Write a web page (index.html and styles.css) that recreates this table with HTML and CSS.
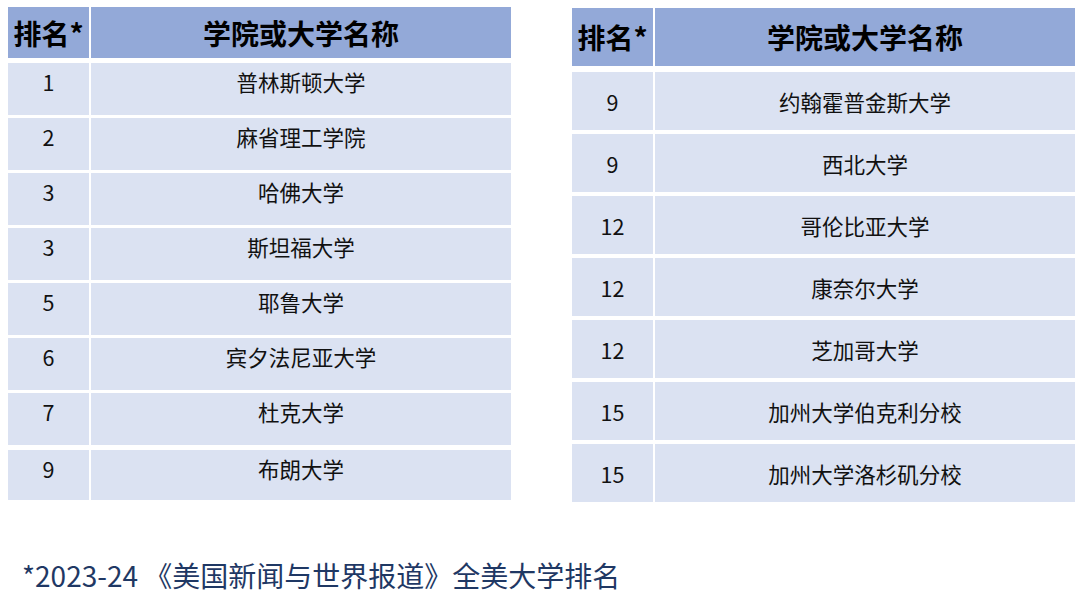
FILE: index.html
```html
<!DOCTYPE html>
<html lang="zh">
<head>
<meta charset="utf-8">
<link rel="stylesheet" href="styles.css">
</head>
<body>
<div class="page">
  <div class="tables">
    <div class="table table-left">
      <div class="cell head">排名*</div>
      <div class="cell head">学院或大学名称</div>
      <div class="cell">1</div><div class="cell">普林斯顿大学</div>
      <div class="cell">2</div><div class="cell">麻省理工学院</div>
      <div class="cell">3</div><div class="cell">哈佛大学</div>
      <div class="cell">3</div><div class="cell">斯坦福大学</div>
      <div class="cell">5</div><div class="cell">耶鲁大学</div>
      <div class="cell">6</div><div class="cell">宾夕法尼亚大学</div>
      <div class="cell">7</div><div class="cell">杜克大学</div>
      <div class="cell last">9</div><div class="cell last">布朗大学</div>
    </div>
    <div class="table table-right">
      <div class="cell head">排名*</div>
      <div class="cell head">学院或大学名称</div>
      <div class="cell">9</div><div class="cell">约翰霍普金斯大学</div>
      <div class="cell">9</div><div class="cell">西北大学</div>
      <div class="cell">12</div><div class="cell">哥伦比亚大学</div>
      <div class="cell">12</div><div class="cell">康奈尔大学</div>
      <div class="cell">12</div><div class="cell">芝加哥大学</div>
      <div class="cell">15</div><div class="cell">加州大学伯克利分校</div>
      <div class="cell">15</div><div class="cell">加州大学洛杉矶分校</div>
    </div>
  </div>
  <p class="note">*2023-24 《美国新闻与世界报道》全美大学排名</p>
</div>
</body>
</html>
```

FILE: styles.css
```css
html, body {
  margin: 0;
  padding: 0;
  background: #ffffff;
}

body {
  font-family: "Noto Sans CJK SC", "Noto Sans", sans-serif;
  color: #111111;
}

.page {
  width: 1080px;
  height: 606px;
  padding: 7px 5px 0 8px;
  box-sizing: border-box;
}

.tables {
  display: flex;
  gap: 61px;
  align-items: flex-start;
}

.table {
  display: grid;
  grid-template-columns: 81px 420px;
  column-gap: 2px;
  width: 503px;
}

.cell {
  background: #dbe2f2;
  font-size: 21.5px;
  text-align: center;
}

.cell.head {
  background: #93a9d8;
  font-weight: 700;
  font-size: 28px;
  color: #000000;
  display: flex;
  align-items: center;
  justify-content: center;
  margin-bottom: 2px;
}

.table-left {
  grid-template-rows: 53px repeat(8, 52px);
  row-gap: 3px;
}

.table-left .cell:not(.head) {
  line-height: 30px;
  padding-top: 4px;
  box-sizing: border-box;
}

.table-left .cell.last {
  margin-top: 2px;
}

.table-right {
  margin-top: 1px;
  grid-template-rows: 60px repeat(7, 58px);
  row-gap: 4px;
}

.table-right .cell:not(.head) {
  display: flex;
  align-items: center;
  justify-content: center;
}

.note {
  margin: 55px 0 0 14px;
  font-size: 28px;
  line-height: 36px;
  color: #1f3864;
}
```
